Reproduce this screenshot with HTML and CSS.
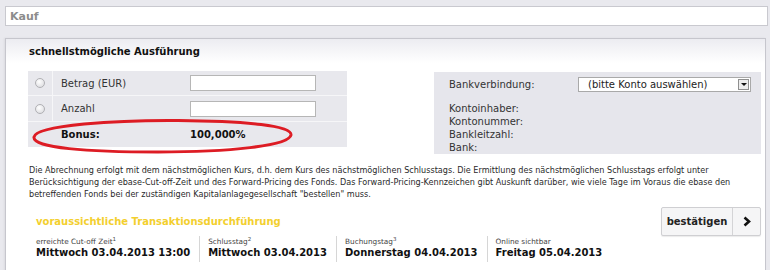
FILE: index.html
```html
<!DOCTYPE html>
<html lang="de">
<head>
  <meta charset="UTF-8" />
  <meta name="viewport" content="width=device-width, initial-scale=1.0"/>
  <title>Kauf</title>
  <link rel="stylesheet" href="styles.css">
</head>
<body>
  <div class="topbar">Kauf</div>

  <div class="panel">
    <h2 class="title">schnellstmögliche Ausführung</h2>

    <div class="forms">
      <div class="order">
        <div class="row">
          <span class="radio-cell"><span class="radio"></span></span>
          <span class="label">Betrag (EUR)</span>
          <span class="field"><input type="text" class="input" /></span>
        </div>
        <div class="row">
          <span class="radio-cell"><span class="radio"></span></span>
          <span class="label">Anzahl</span>
          <span class="field"><input type="text" class="input" /></span>
        </div>
        <div class="row bonus">
          <span class="radio-cell empty"></span>
          <span class="label">Bonus:</span>
          <span class="field">100,000%</span>
        </div>
        <!-- hand drawn marker round the bonus row -->
        <svg class="marker" width="330" height="100" viewBox="0 0 330 100">
          <path d="M6 66 C 8 54, 90 49, 150 49.5 C 220 50, 264 55, 263 64 C 261 75, 200 81, 130 81 C 60 81, 4 77, 6 66 Z"
                fill="none" stroke="#dd1c24" stroke-width="3" />
        </svg>
      </div>

      <div class="bank">
        <div class="bank-row">
          <span class="bank-label">Bankverbindung:</span>
          <div class="select">
            <span>(bitte Konto auswählen)</span>
            <span class="select-btn"><span class="caret"></span></span>
          </div>
        </div>
        <div class="bank-details">
          <div>Kontoinhaber:</div>
          <div>Kontonummer:</div>
          <div>Bankleitzahl:</div>
          <div>Bank:</div>
        </div>
      </div>
    </div>

    <p class="note">Die Abrechnung erfolgt mit dem nächstmöglichen Kurs, d.h. dem Kurs des nächstmöglichen Schlusstags. Die Ermittlung des nächstmöglichen Schlusstags erfolgt unter Berücksichtigung der ebase-Cut-off-Zeit und des Forward-Pricing des Fonds. Das Forward-Pricing-Kennzeichen gibt Auskunft darüber, wie viele Tage im Voraus die ebase den betreffenden Fonds bei der zuständigen Kapitalanlagegesellschaft "bestellen" muss.</p>

    <div class="execution">
      <div class="exec-info">
        <h3 class="exec-title">voraussichtliche Transaktionsdurchführung</h3>
        <div class="dates">
          <div class="date">
            <div class="date-label">erreichte Cut-off Zeit<sup>1</sup></div>
            <div class="date-value">Mittwoch 03.04.2013 13:00</div>
          </div>
          <div class="date">
            <div class="date-label">Schlusstag<sup>2</sup></div>
            <div class="date-value">Mittwoch 03.04.2013</div>
          </div>
          <div class="date">
            <div class="date-label">Buchungstag<sup>3</sup></div>
            <div class="date-value">Donnerstag 04.04.2013</div>
          </div>
          <div class="date">
            <div class="date-label">Online sichtbar</div>
            <div class="date-value">Freitag 05.04.2013</div>
          </div>
        </div>
      </div>

      <button class="confirm">
        <span class="confirm-text">bestätigen</span>
        <span class="confirm-arrow">
          <svg width="8" height="11" viewBox="0 0 8 11"><polyline points="1.5,1.5 6,5.5 1.5,9.5" fill="none" stroke="#111" stroke-width="2.6" /></svg>
        </span>
      </button>
    </div>
  </div>
</body>
</html>
```

FILE: styles.css
```css
* { box-sizing: border-box; }
body {
  margin: 0;
  padding: 6px 2px 0 5px;
  background-color: #e9e9ee;
  font-family: 'DejaVu Sans', Verdana, sans-serif;
  color: #222;
  overflow: hidden;
}
.topbar {
  height: 20px;
  background-color: #fff;
  border: 1px solid #c9c9cf;
  padding-left: 4px;
  font-size: 11px;
  font-weight: bold;
  line-height: 19px;
  color: #8c8c8c;
}
.panel {
  margin: 12px 2px 0 0;
  border: 1px solid #c6c6cd;
  border-bottom: none;
  background: linear-gradient(#ececf1, #fff 24px);
  padding: 6px 4px 20px 22px;
  box-shadow: -1px 0 2px rgba(0,0,0,0.06);
}
.title {
  margin: 0 0 0 1px;
  font-size: 10px;
  line-height: 13px;
  color: #111;
}

/* order form + bank box */
.forms {
  display: flex;
  justify-content: space-between;
  align-items: flex-start;
  margin-top: 13px;
}
.order {
  position: relative;
  width: 319px;
  background-color: #e8e8ed;
  font-size: 10px;
}
.row {
  display: flex;
  align-items: center;
  height: 25px;
  border-bottom: 1px solid #f6f6f8;
}
.row:nth-child(2) { height: 26px; }
.row.bonus { border-bottom: none; font-weight: bold; color: #111; }
.radio-cell {
  width: 25px;
  height: 100%;
  border-right: 1px solid #f6f6f8;
  display: flex;
  align-items: center;
  justify-content: center;
}
.radio-cell.empty { border-right: none; }
.radio {
  width: 10px;
  height: 10px;
  border-radius: 50%;
  border: 1px solid #b0b0b4;
  background: radial-gradient(circle at 40% 35%, #fff, #d6d6da);
}
.label {
  width: 137px;
  padding-left: 8px;
  color: #333;
}
.bonus .label { color: #111; }
.input {
  display: block;
  width: 126px;
  height: 16px;
  margin: 0;
  border: 1px solid #b6b6b6;
  background: #fff;
}
.marker {
  position: absolute;
  left: 0;
  top: 0;
  overflow: visible;
  pointer-events: none;
}

.bank {
  width: 327px;
  margin-top: 1px;
  padding: 4px 10px 0 15px;
  height: 82px;
  background-color: #e6e6ec;
  font-size: 10px;
  color: #333;
}
.bank-row {
  display: flex;
  align-items: center;
  height: 16px;
}
.bank-label { width: 129px; }
.select {
  display: flex;
  align-items: center;
  justify-content: space-between;
  width: 173px;
  height: 15px;
  padding: 0 1px 0 9px;
  background: #fff;
  border: 1px solid #a9a9a9;
  color: #222;
}
.select-btn {
  width: 11px;
  height: 11px;
  border: 1px solid #8f8f8f;
  background: #ededed;
  display: flex;
  align-items: center;
  justify-content: center;
}
.caret {
  border-left: 3px solid transparent;
  border-right: 3px solid transparent;
  border-top: 3px solid #111;
}
.bank-details {
  margin-top: 10px;
  line-height: 13px;
}

.note {
  margin: 10px 0 0 1px;
  padding-right: 6px;
  font-size: 8.1px;
  line-height: 12px;
  color: #2a2a2a;
}

/* expected execution */
.execution {
  display: flex;
  justify-content: space-between;
  align-items: flex-start;
  margin-top: 5px;
}
.exec-info { padding-left: 8px; }
.exec-title {
  margin: 10px 0 0;
  font-size: 10px;
  line-height: 13px;
  color: #f3cf2e;
}
.dates {
  display: flex;
  margin-top: 8px;
}
.date {
  padding: 1px 9px 3px 8px;
  border-left: 1px solid #d6d6d6;
}
.date:first-child { padding-left: 0; border-left: none; }
.date-label {
  font-size: 7.3px;
  line-height: 9px;
  color: #444;
}
.date-label sup { font-size: 5.5px; line-height: 0; }
.date-value {
  font-size: 10px;
  font-weight: bold;
  line-height: 13px;
  color: #111;
}

.confirm {
  display: flex;
  flex-shrink: 0;
  align-items: stretch;
  width: 100px;
  height: 29px;
  margin-top: 2px;
  padding: 0;
  border: 1px solid #cfcfd2;
  border-radius: 2px;
  background: #f5f5f6;
  box-shadow: 0 1px 1px rgba(0,0,0,0.08);
  font-family: inherit;
  cursor: pointer;
}
.confirm-text {
  display: flex;
  align-items: center;
  width: 71px;
  justify-content: center;
  border-right: 1px solid #d4d4d6;
  font-size: 10px;
  font-weight: bold;
  color: #222;
}
.confirm-arrow {
  display: flex;
  align-items: center;
  justify-content: center;
  flex: 1;
}
```
